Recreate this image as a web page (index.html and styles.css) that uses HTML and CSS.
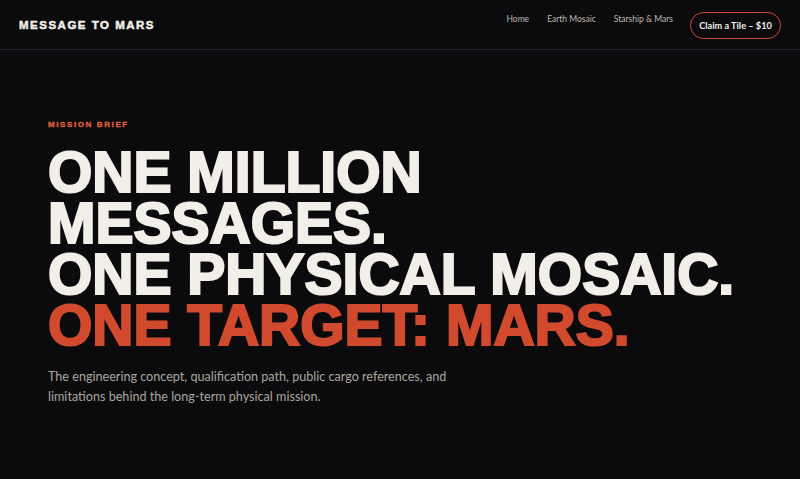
FILE: index.html
```html
<!DOCTYPE html>
<html lang="en">
<head>
<meta charset="utf-8">
<title>Message to Mars</title>
<link rel="stylesheet" href="styles.css">
</head>
<body>
<header class="nav">
  <div class="logo">MESSAGE TO MARS</div>
  <nav class="links">
    <a class="link" href="#">Home</a>
    <a class="link" href="#">Earth Mosaic</a>
    <a class="link" href="#">Starship &amp; Mars</a>
    <a class="cta" href="#">Claim a Tile – $10</a>
  </nav>
</header>
<main class="hero">
  <div class="eyebrow">MISSION BRIEF</div>
  <h1 class="title">ONE MILLION<br>MESSAGES.<br>ONE PHYSICAL MOSAIC.<br><span class="accent">ONE TARGET: MARS.</span></h1>
  <p class="lead">The engineering concept, qualification path, public cargo references, and limitations behind the long-term physical mission.</p>
</main>
</body>
</html>
```
FILE: styles.css
```css
html, body {
  margin: 0;
  padding: 0;
  background: #0b0b0d;
  height: 100%;
}
body {
  font-family: "Lato", "Liberation Sans", sans-serif;
  color: #f1efe8;
  overflow: hidden;
}
.nav {
  height: 50px;
  box-sizing: border-box;
  border-bottom: 1px solid #26262a;
  display: flex;
  align-items: center;
  justify-content: space-between;
  padding: 0 19px;
}
.logo {
  font-family: "Liberation Sans", Arial, sans-serif;
  font-weight: 700;
  font-size: 11.5px;
  letter-spacing: 1.5px;
  color: #f1efe8;
  -webkit-text-stroke: 0.5px #f1efe8;
  margin-top: 1px;
}
.links {
  display: flex;
  align-items: flex-start;
  margin-top: 1px;
}
.link {
  font-size: 8.5px;
  color: #bdb9b2;
  text-decoration: none;
  margin-right: 18px;
  margin-top: 1px;
  line-height: 12px;
}
.link:nth-child(3) {
  margin-right: 17px;
}
.cta {
  display: inline-flex;
  align-items: center;
  justify-content: center;
  width: 91px;
  height: 27px;
  box-sizing: border-box;
  border: 1.5px solid #d14a2e;
  border-radius: 14px;
  font-size: 9.2px;
  font-weight: 700;
  color: #f1efe8;
  text-decoration: none;
}
.hero {
  padding: 70px 0 0 48px;
}
.eyebrow {
  font-family: "Liberation Sans", Arial, sans-serif;
  font-weight: 700;
  font-size: 8px;
  letter-spacing: 1.6px;
  color: #e0603e;
  -webkit-text-stroke: 0.3px #e0603e;
}
.title {
  margin: 18px 0 0 0;
  font-family: "Liberation Sans", Arial, sans-serif;
  font-weight: 700;
  font-size: 57px;
  line-height: 51px;
  letter-spacing: 0;
  color: #f1efe8;
  -webkit-text-stroke: 2.2px #f1efe8;
}
.accent {
  color: #d14a2e;
  -webkit-text-stroke: 2.2px #d14a2e;
}
.lead {
  margin: 16px 0 0 0;
  max-width: 405px;
  font-size: 12.6px;
  line-height: 20px;
  color: #aaa69f;
}
```
